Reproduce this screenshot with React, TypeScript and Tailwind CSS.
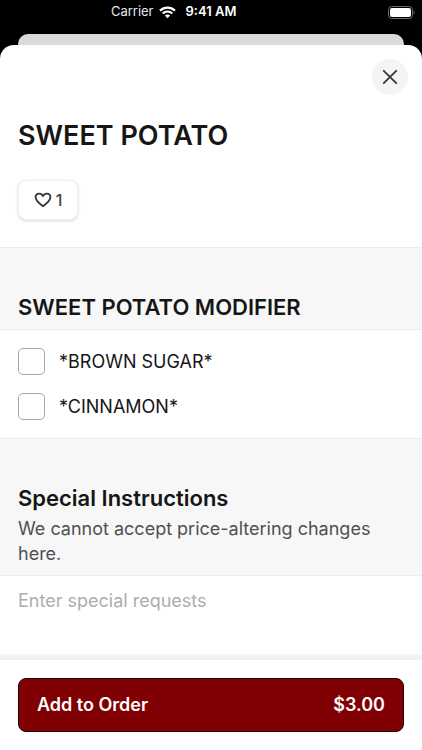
import { useState } from "react";

const modifiers = ["*BROWN SUGAR*", "*CINNAMON*"];

function StatusBar() {
  return (
    <div className="flex h-6 shrink-0 items-center gap-2.5 px-[7px] text-[13px] text-white">
      <div className="flex flex-1 items-center justify-end gap-[5px]">
        <span className="text-gray-200">Carrier</span>
        <svg width="17" height="13" viewBox="0 0 17 13" fill="none">
          <path d="M1 4.6a10.8 10.8 0 0 1 15 0" stroke="white" strokeWidth="2.3" />
          <path d="M3.7 7.4a6.9 6.9 0 0 1 9.6 0" stroke="white" strokeWidth="2.1" />
          <path d="M8.5 12.2L5.9 9.6a3.8 3.8 0 0 1 5.2 0z" fill="white" />
        </svg>
      </div>
      <span className="font-semibold">9:41 AM</span>
      <div className="flex flex-1 justify-end">
        <svg width="27" height="13" viewBox="0 0 27 13" fill="none">
          <rect x="0.5" y="0.5" width="24" height="12" rx="3.2" stroke="#6b6b6b" />
          <rect x="2" y="2" width="21" height="9" rx="2" fill="white" />
          <path d="M25.6 4.6c1.4.5 1.4 3.3 0 3.8z" fill="#6b6b6b" />
        </svg>
      </div>
    </div>
  );
}

export default function App() {
  const [checked, setChecked] = useState<string[]>([]);
  const [likes, setLikes] = useState(1);
  const [request, setRequest] = useState("");

  const toggle = (name: string) => {
    if (checked.includes(name)) setChecked(checked.filter((c) => c !== name));
    else setChecked([...checked, name]);
  };

  return (
    <div className="flex min-h-screen flex-col bg-black font-[Inter,sans-serif] text-[#161616]">
      <StatusBar />
      <div className="mx-[18px] mt-2.5 h-[11px] shrink-0 rounded-t-[10px] bg-[#dadada]"></div>

      <main className="flex flex-1 flex-col overflow-hidden rounded-t-[14px] bg-white">
        <section className="px-[18px] pb-[27px]">
          <div className="-mr-1 flex justify-end pt-3.5">
            <button
              aria-label="Close"
              className="flex h-9 w-9 items-center justify-center rounded-full bg-[#f4f4f4]"
            >
              <svg width="16" height="16" viewBox="0 0 16 16" fill="none">
                <path
                  d="M1.8 1.8l12.4 12.4M14.2 1.8L1.8 14.2"
                  stroke="#3a3a3a"
                  strokeWidth="1.9"
                  strokeLinecap="round"
                />
              </svg>
            </button>
          </div>
          <h1 className="mt-[25px] text-[27px] leading-8 font-semibold">SWEET POTATO</h1>
          <button
            onClick={() => setLikes(likes === 1 ? 2 : 1)}
            className="mt-7 flex h-10 w-[60px] items-center justify-center gap-1 rounded-lg border border-[#f0f0f0] bg-white text-base font-medium text-[#444] shadow-[0_1px_3px_rgba(0,0,0,0.16)]"
          >
            <svg width="18" height="16" viewBox="0 0 18 16" fill="none">
              <path
                d="M9 14.2C6.6 12.4 1.6 9 1.6 5.3 1.6 3.1 3.2 1.6 5.2 1.6 6.8 1.6 8.2 2.4 9 4c.8-1.6 2.2-2.4 3.8-2.4 2 0 3.6 1.5 3.6 3.7 0 3.7-5 7.1-7.4 8.9z"
                stroke="#3a3a3a"
                strokeWidth="1.9"
                strokeLinejoin="round"
              />
            </svg>
            {likes}
          </button>
        </section>

        <div className="border-y border-[#ededed] bg-[#f7f7f7] px-[18px] pt-[45px] pb-2">
          <h2 className="text-[22px] leading-7 font-semibold">SWEET POTATO MODIFIER</h2>
        </div>

        <section className="flex flex-col gap-[18px] px-[18px] py-[18px]">
          {modifiers.map((name) => (
            <label key={name} className="flex items-center gap-3.5 text-lg leading-[27px]">
              <input
                type="checkbox"
                checked={checked.includes(name)}
                onChange={() => toggle(name)}
                className="h-[27px] w-[27px] appearance-none rounded-[5px] border border-[#a8a8a8] bg-white checked:bg-[#800004]"
              />
              {name}
            </label>
          ))}
        </section>

        <div className="border-y border-[#ededed] bg-[#f7f7f7] px-[18px] pt-[45px] pb-[9px]">
          <h2 className="text-[22px] leading-7 font-semibold">Special Instructions</h2>
          <p className="mt-1 text-lg leading-[25px] text-[#505050]">
            We cannot accept price-altering changes here.
          </p>
        </div>

        <textarea
          aria-label="Special requests"
          value={request}
          onChange={(e) => setRequest(e.target.value)}
          placeholder="Enter special requests"
          className="h-[78px] w-full shrink-0 resize-none px-[18px] pt-3 text-lg leading-[25px] outline-none placeholder:text-[#adadad]"
        ></textarea>
        <div className="min-h-1.5 flex-1 bg-linear-to-b from-[#f7f7f7] to-[#efefef]"></div>

        <footer className="bg-white px-[18px] py-[18px]">
          <button className="flex h-[54px] w-full items-center justify-between rounded-lg border border-[#250001] bg-[#800004] px-[18px] text-lg font-semibold text-white">
            <span>Add to Order</span>
            <span>$3.00</span>
          </button>
        </footer>
      </main>
    </div>
  );
}
